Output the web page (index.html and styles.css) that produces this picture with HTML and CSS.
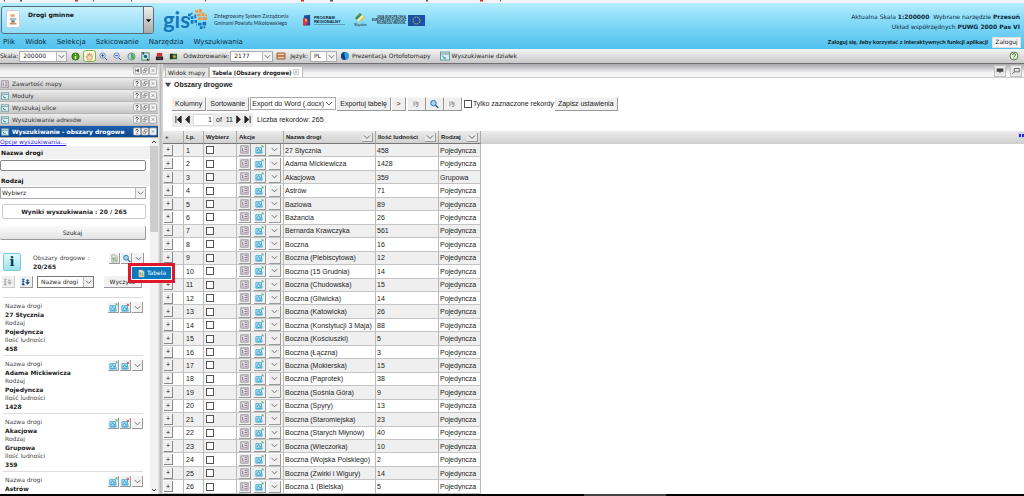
FILE: index.html
```
<!DOCTYPE html>
<html lang="pl">
<head>
<meta charset="utf-8">
<title>Drogi gminne</title>
<link rel="stylesheet" href="styles.css">
</head>
<body>
<svg class="sprite" aria-hidden="true">
  <symbol id="chev" viewBox="0 0 10 10"><path d="M2 3.5 5 6.5 8 3.5" fill="none" stroke="#666" stroke-width="1"/></symbol>
  <symbol id="help" viewBox="0 0 10 10"><rect x=".5" y=".5" width="9" height="9" rx="1.5" fill="#f6f6f6" stroke="#9a9a9a"/><path d="M3.5 3.8C3.5 2 6.6 2 6.5 3.8 6.4 4.8 5 4.8 5 6.2M5 7v1" fill="none" stroke="#222" stroke-width="1.1"/></symbol>
  <symbol id="restore" viewBox="0 0 10 10"><rect x=".5" y=".5" width="9" height="9" rx="1.5" fill="#f6f6f6" stroke="#9a9a9a"/><path d="M4.5 2.5h3v3h-3zM2.5 4.5h3v3h-3z" fill="none" stroke="#777" stroke-width=".8"/></symbol>
  <symbol id="close" viewBox="0 0 10 10"><rect x=".5" y=".5" width="9" height="9" rx="1.5" fill="#f6f6f6" stroke="#9a9a9a"/><path d="m3 3 4 4m0-4-4 4" stroke="#777" stroke-width=".8"/></symbol>
  <symbol id="dock" viewBox="0 0 10 10"><rect x=".5" y=".5" width="9" height="9" rx="1.5" fill="#f6f6f6" stroke="#9a9a9a"/><path d="M3 2.5v5M4 5l3-2v4z" stroke="#555" stroke-width=".8" fill="#555"/></symbol>
  <symbol id="window" viewBox="0 0 10 10"><rect x=".5" y="1" width="9" height="8" fill="#dbeff2" stroke="#6a9aa0"/><path d="M1 3h8" stroke="#6a9aa0"/><path d="m2 4.5 3 3M3 7h3" stroke="#2c8f9b"/></symbol>
  <symbol id="list" viewBox="0 0 10 10"><rect x="1" y="1" width="8" height="8" fill="#ece8ee" stroke="#8a828a"/><path d="M3 3v4h1M5 3h3M5 5h3M5 7h3" stroke="#857585" fill="none"/></symbol>
  <symbol id="map" viewBox="0 0 10 10"><path d="M1 3h6l1 6H1z" fill="#bfe9f7" stroke="#3ba9d4"/><path d="m2 7 2-3 2 3 1-2M2 8h5" fill="none" stroke="#2a8cc2" stroke-width=".9"/><path d="m7 3 2-2M7 1h2v2" fill="none" stroke="#5ab47a"/></symbol>
  <symbol id="mapred" viewBox="0 0 10 10"><path d="M1 3h6l1 6H1z" fill="#bfe9f7" stroke="#3ba9d4"/><path d="m2 7 2-3 2 3 1-2M2 8h5" fill="none" stroke="#2a8cc2" stroke-width=".9"/><path d="M6.5.8 9 3.3m0-2.500-2.500 2.500" fill="none" stroke="#d33a3a"/></symbol>
  <symbol id="lens" viewBox="0 0 10 10"><rect x="1" y="1" width="5" height="5" fill="#cfe4f2"/><circle cx="4.5" cy="4.2" r="2.7" fill="#a9d4f0" stroke="#2f78b5"/><path d="m6.5 6.2 2.8 2.8" stroke="#2f5f95" stroke-width="1.4"/></symbol>
  <symbol id="doc" viewBox="0 0 10 10"><path d="M2 1h4l2 2v6H2z" fill="#e9f3e4" stroke="#8a9a84" stroke-width=".8"/><path d="M3.5 3.5v4M5 3.5h1.5M4 5.5h3M5 7.2h2" stroke="#5b8a4e" stroke-width=".9"/></symbol>
  <symbol id="docgray" viewBox="0 0 10 10"><path d="M3 2.5v5M4.5 2.5 6 4M4 5h3M5 7.5h2M7 3v4" fill="none" stroke="#999" stroke-width="1.1"/></symbol>
  <symbol id="sort" viewBox="0 0 12 10"><path d="M1 1.5h3L1 4.5h3M1 9l1.500-3.500L4 9M8 1.5v6M5.8 5.2 8 8l2.200-2.800zM6 3h4" fill="currentColor" stroke="currentColor" stroke-width=".9"/></symbol>
</svg>

<div class="strip">
  <svg viewBox="0 0 1024 4" preserveAspectRatio="none"><path d="M4 1h1M20 1h2M93 1h1M131 1h1M205 1h1M330 1h3M426 1h2M500 1h1" stroke="#555" stroke-width="2"/><path d="M75 1h3M301 1h3M480 1h3" stroke="#c03a2a" stroke-width="2"/></svg>
</div>

<header class="header">
  <div class="brand">
    <button class="project" type="button">
      <span class="crest"><svg viewBox="0 0 14 17"><path d="M4 3h5v3H4z" fill="#e8a66a"/><path d="M3 7h8v3H3z" fill="#a7c1c9"/><path d="M5 10h4v3H5z" fill="#6f8088"/><path d="M3 14h8" stroke="#d78c68" stroke-width="2"/></svg></span>
      <strong>Drogi gminne</strong>
      <span class="drop"><svg viewBox="0 0 8 8"><path d="M1 2.5h6L4 6z" fill="#111"/></svg></span>
    </button>
    <div class="logo">
      <b>gis</b>
      <svg viewBox="0 0 22 24"><g fill="#1677bd"><path d="M0 5h3v3H0zM3 8h3v3H3zM0 9h2v3H0zM3 12h3v4H3zM7 6h2v4H7zM7 12h3v3H7zM3 4h2v2H3zM11 15h4v3h-4zM16 14h4v4h-4zM13 19h3v3h-3zM17 19h2v2h-2zM9 16h1v2H9z"/></g><g fill="#f4933a"><path d="M8 1h3v3H8zM12 0h3v4h-3zM10 5h4v3h-4zM15 4h3v4h-3zM11 9h4v3h-4zM16 9h5v3h-5zM19 6h2v2h-2z"/></g></svg>
      <p>Zintegrowany System Zarządzania<br>Gminami Powiatu Mikołowskiego</p>
    </div>
    <div class="funds">
      <svg class="pr" viewBox="0 0 9 13"><path d="M1 1 8 0v12H1z" fill="#224a9a"/><path d="M0 4h4l2 4-3 4H0z" fill="#e0304a"/><path d="m2 4 3 2-2 2z" fill="#ffd23a"/></svg>
      <p class="prtext"><b>PROGRAM<br>REGIONALNY</b></p>
      <div class="silesia"><svg viewBox="0 0 12 10"><path d="m1 5 5-5 5 4-5 5z" fill="#e3c03a"/><path d="m1 5 5-5 2 2-5 5z" fill="#38946b"/><path d="m3 7 5-5 1.500 1.500-5 5z" fill="#f4f0d0"/></svg><span>Śląskie</span></div>
      <p class="eutext">UNIA EUROPEJSKA<br>EUROPEJSKI FUNDUSZ<br>ROZWOJU REGION.</p>
      <svg class="eu" viewBox="0 0 17 11"><path d="M0 0h17v11H0z" fill="#1b4fa8"/><circle cx="8.5" cy="5.5" r="3.5" fill="none" stroke="#f1d33c" stroke-width="1" stroke-dasharray="1 .83"/></svg>
    </div>
    <div class="status">
      <p>Aktualna Skala <b>1:200000</b>&nbsp; Wybrane narzędzie <b>Przesuń</b></p>
      <p>Układ współrzędnych <b>PUWG 2000 Pas VI</b></p>
    </div>
  </div>
  <div class="menurow">
    <nav class="menu"><a href="#">Plik</a><a href="#">Widok</a><a href="#">Selekcja</a><a href="#">Szkicowanie</a><a href="#">Narzędzia</a><a href="#">Wyszukiwania</a></nav>
    <b class="notice">Zaloguj się, żeby korzystać z interaktywnych funkcji aplikacji</b>
    <button class="login" type="button">Zaloguj</button>
  </div>
</header>

<div class="toolbar">
  <label for="scale">Skala:</label>
  <span class="select scale"><select id="scale"><option>200000</option></select><svg><use href="#chev"/></svg></span>
  <div class="tools">
    <button type="button" aria-label="Informacja"><svg viewBox="0 0 10 10"><circle cx="5" cy="5" r="4" fill="#4c9a1c" stroke="#2c6a0c"/><path d="M5 2v1.200M5 4.5v3.5" stroke="#efffd8" stroke-width="1.5"/></svg></button>
    <button type="button" class="on" aria-label="Przesuń"><svg viewBox="0 0 10 10"><path d="M3 9 1 5l2 1V2h1v2l1-3 1 3 1-2v3l1-1v3L7 9z" fill="#f5dcb4" stroke="#b58a50" stroke-width=".7"/></svg></button>
    <button type="button" aria-label="Powiększ"><svg viewBox="0 0 10 10"><circle cx="4" cy="4" r="3" fill="#cfe4f7" stroke="#5c8cc0"/><path d="M2.5 4h3M4 2.5v3M6.5 6.5 9 9" stroke="#274f86"/></svg></button>
    <button type="button" aria-label="Pomniejsz"><svg viewBox="0 0 10 10"><circle cx="4" cy="4" r="3" fill="#cfe4f7" stroke="#5c8cc0"/><path d="M2.5 4h3M6.5 6.5 9 9" stroke="#274f86"/></svg></button>
    <button type="button" aria-label="Cały zasięg"><svg viewBox="0 0 10 10"><circle cx="5" cy="5" r="4" fill="#a8dce0" stroke="#6a8c9a"/><path d="M5 1c3 1 4 5 2 7L4 8c2-2-1-4 1-7z" fill="#5fa84c"/></svg></button>
    <button type="button" aria-label="Zasięg"><svg viewBox="0 0 10 10"><rect x="1" y="1" width="8" height="8" fill="#d4efe6" stroke="#3b7a6a"/><circle cx="5" cy="5" r="2" fill="#1e6a8a"/><path d="M1 1h2v2M9 9H7V7" stroke="#224" fill="none"/></svg></button>
    <button type="button" aria-label="Drukuj"><svg viewBox="0 0 10 10"><path d="M2 1h6v4H2z" fill="#c33"/><path d="M1 5h8v4H1z" fill="#223"/><path d="M3 7h4" stroke="#c33"/></svg></button>
    <button type="button" aria-label="Warstwy"><svg viewBox="0 0 10 10"><path d="M1 2h8v6H1z" fill="#2f6a2c"/><path d="M1 2h3v6H1z" fill="#243a24"/><circle cx="6" cy="5" r="1.5" fill="#e0b040"/></svg></button>
  </div>
  <label for="proj">Odwzorowanie:</label>
  <span class="select proj"><select id="proj"><option>2177</option></select><svg><use href="#chev"/></svg></span>
  <svg class="flag" viewBox="0 0 10 10"><path d="M1 2h8v6H1z" fill="#e8c8a0" stroke="#9a5a3a"/><path d="M1 5h8" stroke="#b5653a" stroke-width="1.5"/></svg>
  <label for="lang">Język:</label>
  <span class="select lang"><select id="lang"><option>PL</option></select><svg><use href="#chev"/></svg></span>
  <a href="#"><svg viewBox="0 0 10 10"><circle cx="5" cy="5" r="4" fill="#2aa0d8"/><path d="M5 1a4 4 0 0 0 0 8c2-2-2-4 0-8z" fill="#123f7c"/></svg>Prezentacja Ortofotomapy</a>
  <a href="#"><svg><use href="#window"/></svg>Wyszukiwanie działek</a>
  <button class="about" type="button" aria-label="Pomoc"><svg viewBox="0 0 10 10"><circle cx="5" cy="5" r="4" fill="#e6f2dc" stroke="#5f7f4c"/><path d="M3.5 4C3.5 2.200 6.6 2.200 6.5 4 6.4 5 5 5 5 6M5 6.8v1" fill="none" stroke="#3c5f2c"/></svg></button>
</div>

<div class="work">
  <aside class="side">
    <div class="panelhead top"><span></span><span class="win"><svg><use href="#dock"/></svg><svg><use href="#restore"/></svg><svg><use href="#close"/></svg></span></div>
    <div class="panelhead"><svg><use href="#list"/></svg><span>Zawartość mapy</span><span class="win"><svg><use href="#help"/></svg><svg><use href="#restore"/></svg><svg><use href="#close"/></svg></span></div>
    <div class="panelhead"><svg><use href="#window"/></svg><span>Moduły</span><span class="win"><svg><use href="#help"/></svg><svg><use href="#restore"/></svg><svg><use href="#close"/></svg></span></div>
    <div class="panelhead"><svg><use href="#window"/></svg><span>Wyszukaj ulice</span><span class="win"><svg><use href="#help"/></svg><svg><use href="#restore"/></svg><svg><use href="#close"/></svg></span></div>
    <div class="panelhead"><svg><use href="#window"/></svg><span>Wyszukiwanie adresów</span><span class="win"><svg><use href="#help"/></svg><svg><use href="#restore"/></svg><svg><use href="#close"/></svg></span></div>
    <div class="panelhead active"><svg><use href="#window"/></svg><span>Wyszukiwanie - obszary drogowe</span><span class="win"><svg><use href="#help"/></svg><svg><use href="#restore"/></svg><svg><use href="#close"/></svg></span></div>
    <div class="panel">
      <div class="content">
        <a class="opts" href="#">Opcje wyszukiwania...</a>
        <form class="search">
          <label for="name">Nazwa drogi</label>
          <input id="name" type="text">
          <label for="kind">Rodzaj</label>
          <span class="select kind"><select id="kind"><option>Wybierz</option></select><svg><use href="#chev"/></svg></span>
          <p class="found">Wyniki wyszukiwania : 20 / 265</p>
          <button class="go" type="button">Szukaj</button>
        </form>
        <section class="layer">
          <div class="info">i</div>
          <p>Obszary drogowe :<br><b>20/265</b></p>
          <div class="acts"><button type="button" aria-label="Eksport"><svg><use href="#doc"/></svg></button><button type="button" aria-label="Pokaż"><svg><use href="#lens"/></svg></button><button type="button" aria-label="Więcej"><svg><use href="#chev"/></svg></button>
            <div class="popup"><button type="button"><svg><use href="#doc"/></svg>Tabela</button></div>
          </div>
        </section>
        <div class="sorting">
          <button class="sq off" type="button" aria-label="Rosnąco"><svg><use href="#sort"/></svg></button>
          <button class="sq" type="button" aria-label="Malejąco"><svg><use href="#sort"/></svg></button>
          <span class="select order"><select aria-label="Sortuj"><option>Nazwa drogi</option></select><svg><use href="#chev"/></svg></span>
          <button class="clear" type="button">Wyczyść</button>
        </div>
        <div class="results" id="results"></div>
      </div>
      <div class="scroll"><svg viewBox="0 0 8 8"><path d="m2 5 2-2 2 2" fill="none" stroke="#333"/></svg><div class="thumb"></div><svg viewBox="0 0 8 8"><path d="m2 3 2 2 2-2" fill="none" stroke="#333"/></svg></div>
    </div>
  </aside>
  <div class="splitter"></div>
  <main class="main">
    <div class="tabs">
      <button class="tab" type="button">Widok mapy</button>
      <button class="tab current" type="button">Tabela (Obszary drogowe)<svg><use href="#close"/></svg></button>
      <span class="tabtools">
        <button type="button" aria-label="Komentarz"><svg viewBox="0 0 12 12"><path d="M2 3h8v4H7L6 9 5 7H2z" fill="#444"/></svg></button>
        <button type="button" aria-label="Odepnij"><svg viewBox="0 0 12 12"><path d="M4 3h6v4H4zM4 7 1.500 9.500" fill="none" stroke="#555"/></svg></button>
      </span>
    </div>
    <h1><svg viewBox="0 0 8 8"><path d="M0 1h8L4 7z" fill="#444"/></svg>Obszary drogowe</h1>
    <div class="controls">
      <div class="row">
        <button type="button">Kolumny</button><button type="button">Sortowanie</button>
        <span class="select export"><select aria-label="Eksport"><option>Export do Word (.docx)</option></select><svg><use href="#chev"/></svg></span>
        <button type="button">Exportuj tabelę</button><button type="button" class="next">&gt;</button>
        <span class="trio"><button type="button" aria-label="Dokument"><svg><use href="#docgray"/></svg></button><button type="button" aria-label="Szukaj"><svg><use href="#lens"/></svg></button><button type="button" aria-label="Raport"><svg><use href="#docgray"/></svg></button></span>
        <label class="only"><input type="checkbox">Tylko zaznaczone rekordy</label>
        <button type="button">Zapisz ustawienia</button>
      </div>
      <div class="row">
        <div class="pager">
          <button type="button" aria-label="Pierwsza"><svg viewBox="0 0 8 10"><path d="M1 1v8M7 1 2.500 5 7 9z" fill="#222" stroke="#222"/></svg></button>
          <button type="button" aria-label="Poprzednia"><svg viewBox="0 0 6 10"><path d="M5 1 1 5l4 4z" fill="#222" stroke="#222"/></svg></button>
          <input type="text" value="1" aria-label="Strona"><span>of&nbsp; 11</span>
          <button type="button" aria-label="Następna"><svg viewBox="0 0 6 10"><path d="m1 1 4 4-4 4z" fill="#222" stroke="#222"/></svg></button>
          <button type="button" aria-label="Ostatnia"><svg viewBox="0 0 8 10"><path d="m1 1 4.500 4L1 9zM7 1v8" fill="#222" stroke="#222"/></svg></button>
        </div>
        <span>Liczba rekordów: 265</span>
      </div>
    </div>
    <div class="grid">
      <svg class="pin" viewBox="0 0 6 7"><path d="M0 0h6v7H0z" fill="#cdd3f5"/><path d="M1 2h2v3H1zM4 2h2v3H4z" fill="#2a2ad0"/></svg>
      <table>
        <colgroup><col class="c-plus"><col class="c-no"><col class="c-pick"><col class="c-act"><col class="c-name"><col class="c-pop"><col class="c-kind"></colgroup>
        <thead><tr><th><div>+</div></th><th><div>Lp.</div></th><th><div>Wybierz</div></th><th><div>Akcje</div></th>
          <th><div>Nazwa drogi<button type="button" aria-label="Filtr"><svg><use href="#chev"/></svg></button></div></th>
          <th><div>Ilość ludności<button type="button" aria-label="Filtr"><svg><use href="#chev"/></svg></button></div></th>
          <th><div>Rodzaj<button type="button" aria-label="Filtr"><svg><use href="#chev"/></svg></button></div></th></tr></thead>
        <tbody id="rows"></tbody>
      </table>
    </div>
  </main>
</div>
<footer class="taskbar"><span></span></footer>
<script src="script.js"></script>
</body>
</html>
```
FILE: styles.css
```
* { box-sizing: border-box; }
html, body { height: 100%; }
body {
  margin: 0;
  display: flex;
  flex-direction: column;
  overflow: hidden;
  background: #fff;
  color: #222;
  font: 6px/8px "DejaVu Sans", sans-serif;
}
p, h1, dl, dd { margin: 0; }
button, input, select { font: inherit; color: inherit; margin: 0; padding: 0; border-radius: 0; }
button { border: 0; background: none; display: inline-flex; align-items: center; justify-content: center; }
svg { display: block; width: 10px; height: 10px; flex: none; }
a { color: inherit; text-decoration: none; }
.sprite { position: absolute; width: 0; height: 0; }

.select { position: relative; display: inline-flex; align-items: center; background: #fff; border: 1px solid #aaa; }
.select select { appearance: none; border: 0; background: transparent; width: 100%; height: 100%; padding-left: 3px; }
.select svg { position: absolute; right: 0; height: 100%; background: #f2f2f2; border-left: 1px solid #bbb; pointer-events: none; }

.strip { height: 3px; background: #f3f3f3; flex: none; }
.strip svg { width: 100%; height: 3px; }

/* header */
.header { flex: none; height: 46px; background: linear-gradient(#b4edfd, #80d8f7 45%, #50c1ee); display: flex; flex-direction: column; }
.brand { flex: 1; display: flex; align-items: flex-start; padding: 3px 4px 0 1px; }
.project { width: 153px; height: 28px; border: 1px solid #55707c; border-radius: 3px; background: linear-gradient(#c6f0fc, #8fdcf6); align-items: stretch; justify-content: flex-start; overflow: hidden; }
.crest { width: 14px; height: 18px; margin: 3px 0 0 4px; background: #fff; border: 1px solid #ccd; border-radius: 2px; }
.crest svg { width: 12px; height: 16px; }
.project strong { margin: 4px 0 0 8px; flex: 1; text-align: left; color: #111; }
.drop { width: 10px; background: linear-gradient(#eee, #aaa); border-left: 1px solid #667; display: flex; align-items: center; justify-content: center; }
.drop svg { width: 7px; height: 7px; }
.logo { display: flex; align-items: center; margin-left: 9px; }
.logo b { font: bold 22px/28px Lato, sans-serif; color: #1677bd; }
.logo svg { width: 20px; height: 22px; margin-left: -2px; }
.logo p { font: 5px/7px Lato, sans-serif; width: 75px; white-space: nowrap; margin-left: 6px; color: #234; }
.funds { display: flex; align-items: center; margin: 7px 0 0 14px; }
.pr { width: 8px; height: 13px; }
.prtext { font: 4px/4px "Liberation Sans", sans-serif; margin-left: 3px; width: 31px; border-bottom: 1px solid #5b9dbb; color: #123; }
.silesia { display: flex; flex-direction: column; align-items: center; margin-left: 6px; font: 4px/4px "Liberation Sans", sans-serif; width: 19px; }
.silesia svg { width: 12px; }
.eutext { font: bold 3px/3px "Liberation Sans", sans-serif; margin-left: 2px; text-align: right; width: 34px; white-space: nowrap; color: #234; }
.eu { width: 17px; height: 11px; margin-left: 2px; }
.status { margin-left: auto; padding-top: 6px; text-align: right; line-height: 10px; color: #0c2a3a; }
.menurow { display: flex; align-items: center; height: 13px; padding: 0 3px 1px; }
.menu { display: flex; gap: 10px; flex: 1; font-size: 7px; color: #0b2b3c; }
.notice { font-family: Lato, sans-serif; color: #111; }
.login { width: 29px; height: 11px; margin-left: 4px; background: #f7f7f7; border: 1px solid #ddd; }

/* toolbar */
.toolbar { flex: none; height: 15px; padding: 0 5px 0 0; display: flex; align-items: center; background: linear-gradient(#f4f4f4, #c9c9c9); border-bottom: 1px solid #6f6f75; }
.toolbar .select { height: 11px; }
.scale { width: 48px; margin-left: 1px; }
.tools { display: flex; gap: 1px; margin: 0 3px 0 2px; }
.tools button { width: 13px; height: 12px; }
.tools svg { width: 9px; height: 9px; }
.tools .on { background: #fff7df; border: 1px solid #7cb44c; border-radius: 3px; }
.proj { width: 43px; margin-left: 1px; }
.flag { margin: 0 4px 0 3px; }
.lang { width: 27px; margin: 0 3px 0 2px; }
.toolbar a { display: flex; align-items: center; gap: 2px; margin-right: 9px; }
.about { margin-left: auto; }

/* workspace */
.work { flex: 1; min-height: 0; display: flex; }
.side { position: relative; z-index: 1; width: 158px; flex: none; display: flex; flex-direction: column; }
.panelhead { height: 12px; flex: none; display: flex; align-items: center; padding: 0 1px 0 0; gap: 2px; background: linear-gradient(#ececec, #c6c6c6); border-bottom: 1px solid #b5b5b5; color: #333; }
.panelhead > svg { height: 8px; }
.panelhead.top { height: 14px; background: linear-gradient(#b9b9b9, #f4f4f4 55%); }
.panelhead.active { background: linear-gradient(#1c60ae, #0a4590); color: #fff; font-weight: bold; }
.win { display: flex; margin-left: auto; }
.win svg { width: 8px; height: 9px; }
.panel { flex: 1; min-height: 0; display: flex; }
.content { position: relative; z-index: 1; flex: 1; min-width: 0; display: flex; flex-direction: column; background: #fff; }
.opts { flex: none; color: #1a1ae0; text-decoration: underline; }
.search { flex: none; display: flex; flex-direction: column; background: linear-gradient(#f1f1f1 0 13px, #fff 13px 25px, #f1f1f1 25px 40px, #fff 40px); padding: 3px 4px 0 0; }
.search label { font-weight: bold; color: #111; padding-left: 1px; }
.search input { height: 11px; margin: 3px 0 6px; border: 1px solid #888; border-radius: 2px; }
.kind { height: 12px; margin-top: 2px; }
.kind select { padding-left: 1px; }
.found { margin: 5px 0 7px 2px; height: 15px; line-height: 13px; border: 1px solid #ccc; border-radius: 2px; text-align: center; font-weight: bold; }
.go { height: 14px; background: linear-gradient(#fbfbfb, #e3e3e3); border-right: 1px solid #999; border-bottom: 1px solid #999; border-radius: 2px; }
.layer { flex: none; display: flex; margin: 13px 6px 0 3px; color: #444; }
.layer b { color: #222; }
.info { width: 18px; height: 18px; border: 1px solid #7ccbd8; border-radius: 2px; background: linear-gradient(#e0fafd, #9de2ec); text-align: center; font: bold 13px/16px "DejaVu Serif", serif; color: #063a55; }
.layer p { flex: 1; margin-left: 12px; line-height: 9px; }
.acts { position: relative; display: flex; gap: 1px; height: 12px; }
.acts button { width: 11px; height: 11px; background: #f3f3f3; border-right: 1px solid #999; border-bottom: 1px solid #999; }
.acts svg { width: 9px; height: 9px; }
.acts .popup { position: absolute; z-index: 2; left: 19px; top: 10px; width: 47px; height: 20px; border: 3px solid #e0182d; background: #fff; padding: 1px; }
.acts .popup button { width: 100%; height: 100%; background: #0d78be; color: #fff; border: 0; gap: 1px; }
.sorting { flex: none; display: flex; align-items: center; gap: 5px; margin: 5px 8px 0 2px; }
.sq { width: 13px; height: 12px; background: #f0f0f0; border-right: 1px solid #999; border-bottom: 1px solid #999; color: #124a86; }
.sq.off { color: #aaa; border-color: #ccc; }
.sq svg { height: 8px; }
.order { width: 57px; height: 12px; margin-left: -1px; border-color: #777; }
.clear { width: 38px; height: 12px; margin-left: 5px; background: #f1f1f1; border-right: 1px solid #999; border-bottom: 1px solid #999; }
.results { flex: 1; min-height: 0; overflow: hidden; margin: 9px 7px 0 3px; }
.item { display: flex; justify-content: space-between; min-height: 58px; border-top: 1px solid #ddd; padding: 4px 0 0 2px; }
.item dt { line-height: 8px; color: #444; }
.item dd { font-weight: bold; line-height: 9px; color: #222; }
.scroll { width: 8px; flex: none; background: #f2f2f2; display: flex; flex-direction: column; }
.scroll svg { width: 8px; height: 8px; }
.scroll svg:last-child { margin-top: auto; }
.thumb { height: 86px; background: #cdcdcd; }
.splitter { width: 5px; flex: none; background: linear-gradient(90deg, #ededed, #bcbcbc 50%, #dcdcdc); }

/* main area */
.main { flex: 1; min-width: 0; display: flex; flex-direction: column; font: 7px/9px "Liberation Sans", Arial, sans-serif; color: #222; }
.tabs { flex: none; height: 14px; display: flex; align-items: flex-end; padding: 0 2px 0 2px; background: linear-gradient(#a9a9ad, #f5f5f5 70%); border-bottom: 1px solid #ccc; }
.tab { font-size: 6px; font-family: "DejaVu Sans", sans-serif; height: 10px; padding: 0 3px 0 2px; background: #e6e6e6; border: 1px solid #bbb; border-bottom: 0; }
.tab.current { font-family: "DejaVu Sans Condensed", "DejaVu Sans", sans-serif; font-weight: bold; height: 11px; background: #fff; }
.tab svg { width: 6px; height: 6px; margin-left: 1px; }
.tabtools { margin-left: auto; display: flex; gap: 4px; }
.tabtools button { width: 12px; height: 12px; background: #e8e8e8; border: 1px solid #c4c4c4; }
.main h1 { flex: none; font-size: 7px; line-height: 13px; display: flex; align-items: center; gap: 3px; padding-left: 2px; }
.main h1 svg { width: 6px; height: 6px; }
.controls { flex: none; display: flex; flex-direction: column; gap: 1px; margin: 5px 0 4px 9px; }
.row { display: flex; align-items: center; height: 15px; gap: 1px; }
.row button { height: 14px; padding: 0 3px; background: #f0f0f0; border-right: 1px solid #999; border-bottom: 1px solid #999; border-top: 1px solid #f8f8f8; white-space: nowrap; }
.row .next { width: 14px; }
.export { height: 13px; width: 86px; }
.export select { padding-left: 1px; }
.export svg { background: none; border: 0; right: 1px; }
.trio { display: flex; margin: 0 1px; }
.row .trio button { width: 18px; padding: 0; }
.only { display: flex; align-items: center; gap: 1px; }
input[type="checkbox"] { appearance: none; display: block; width: 8px; height: 8px; border: 1px solid #555; background: #fff; }
.row .pager { display: flex; align-items: center; width: 81px; height: 14px; background: #ececec; padding-left: 3px; margin-right: 3px; gap: 2px; }
.row .pager button { background: none; border: 0; padding: 0; }
.pager svg { width: 7px; height: 9px; }
.pager input { width: 21px; height: 12px; border: 1px solid #ddd; text-align: right; padding-right: 1px; }

.grid { flex: 1; min-height: 0; position: relative; background: linear-gradient(#ececec, #cfcfcf) top / 100% 13px no-repeat; }
.pin { position: absolute; right: 0; top: 1px; width: 6px; height: 7px; }
table { height: 100%; table-layout: fixed; width: 318px; border-collapse: separate; border-spacing: 0; }
.c-plus { width: 21px; }
.c-no { width: 20px; }
.c-pick { width: 33px; }
.c-act { width: 47px; }
.c-name { width: 92px; }
.c-pop { width: 63px; }
.c-kind { width: 42px; }
th { height: 13px; padding: 0 2px; font-size: 6px; line-height: 8px; text-align: left; border-right: 1px solid #aaa; border-bottom: 1px solid #777; white-space: nowrap; }
th div { display: flex; align-items: center; justify-content: space-between; }
th button { width: 11px; height: 9px; border-right: 1px solid #999; border-bottom: 1px solid #999; background: #e8e8e8; }
td { padding: 0 1px; height: 13px; border-right: 1px solid #bbb; border-bottom: 1px solid #c4c4c4; white-space: nowrap; line-height: 9px; }
tbody tr:nth-child(odd) { background: #efefef; }
tbody td:nth-child(1) { padding: 0; }
tbody td:nth-child(2) { padding-left: 2px; }
tbody td:nth-child(3) { padding-left: 2px; }
.plus { width: 9px; height: 11px; background: #f0f0f0; border-right: 1px solid #888; border-bottom: 1px solid #888; margin-left: 1px; }
.cellacts { display: flex; gap: 3px; padding-left: 1px; }
.cellacts button { width: 12px; height: 12px; background: #efefef; border-right: 1px solid #999; border-bottom: 1px solid #999; }
.cellacts svg { width: 9px; height: 9px; }

.taskbar { flex: none; height: 2px; background: #000; }
.taskbar span { display: block; width: 8%; height: 2px; margin-left: 57%; background: #444; }
```
FILE: script.js
```
const streets = [
  ["27 Stycznia", 458], ["Adama Mickiewicza", 1428], ["Akacjowa", 359, "Grupowa"], ["Astrów", 71],
  ["Baziowa", 89], ["Bażancia", 26], ["Bernarda Krawczyka", 561], ["Boczna", 16],
  ["Boczna (Plebiscytowa)", 12], ["Boczna (15 Grudnia)", 14], ["Boczna (Chudowska)", 15],
  ["Boczna (Gliwicka)", 14], ["Boczna (Katowicka)", 26], ["Boczna (Konstytucji 3 Maja)", 88],
  ["Boczna (Kościuszki)", 5], ["Boczna (Łączna)", 3], ["Boczna (Mokierska)", 15],
  ["Boczna (Paprotek)", 38], ["Boczna (Sośnia Góra)", 9], ["Boczna (Spyry)", 13],
  ["Boczna (Staromiejska)", 23], ["Boczna (Starych Młynów)", 40], ["Boczna (Wieczorka)", 10],
  ["Boczna (Wojska Polskiego)", 2], ["Boczna (Żwirki i Wigury)", 14], ["Boczna 1 (Bielska)", 5]
];

const iconButton = (icon, label) =>
  `<button type="button" aria-label="${label}"><svg><use href="#${icon}"/></svg></button>`;

document.getElementById("rows").innerHTML = streets.map(([name, people, kind = "Pojedyncza"], i) => `
  <tr>
    <td><button class="plus" type="button">+</button></td>
    <td>${i + 1}</td>
    <td><input type="checkbox" aria-label="Wybierz ${name}"></td>
    <td><div class="cellacts">${iconButton("list", "Szczegóły")}${iconButton("map", "Mapa")}${iconButton("chev", "Więcej")}</div></td>
    <td>${name}</td><td>${people}</td><td>${kind}</td>
  </tr>`).join("");

const details = (people, kind) =>
  `<dt>Rodzaj</dt><dd>${kind}</dd><dt>Ilość ludności</dt><dd>${people}</dd>`;

document.getElementById("results").innerHTML = streets.slice(0, 4).map(([name, people, kind = "Pojedyncza"], i) => `
  <article class="item">
    <dl><dt>Nazwa drogi</dt><dd>${name}</dd>${i < 3 ? details(people, kind) : ""}</dl>
    <div class="acts">${iconButton("map", "Pokaż na mapie")}${iconButton("mapred", "Usuń z mapy")}${iconButton("chev", "Więcej")}</div>
  </article>`).join("");
```
